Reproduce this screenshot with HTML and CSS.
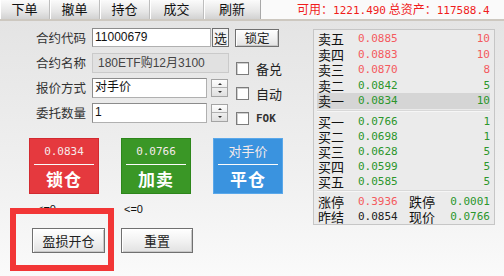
FILE: index.html
```html
<!DOCTYPE html>
<html lang="zh-CN">
<head>
    <meta charset="UTF-8">
    <title>期权下单</title>
    <link rel="stylesheet" href="styles.css">
</head>
<body>
<div class="app">
    <div class="topbar">
        <div class="tabs">
            <span class="tab t1">下单</span>
            <span class="tab t2">撤单</span>
            <span class="tab t3">持仓</span>
            <span class="tab t4">成交</span>
            <span class="tab t5">刷新</span>
        </div>
        <div class="funds">可用：<span class="num">1221.490</span> 总资产：<span class="num">117588.4</span></div>
    </div>

    <div class="main">
        <div class="order">
            <div class="form">
                <div class="row">
                    <span class="lbl">合约代码</span>
                    <div class="field code">11000679</div>
                    <span class="pick">选</span>
                    <span class="btn lock">锁定</span>
                </div>
                <div class="row">
                    <span class="lbl">合约名称</span>
                    <div class="field name">180ETF购12月3100</div>
                    <span class="check"><i class="box"></i>备兑</span>
                </div>
                <div class="row">
                    <span class="lbl">报价方式</span>
                    <div class="field short">对手价</div>
                    <span class="spin"><i class="up"></i><i class="down"></i></span>
                    <span class="check"><i class="box"></i>自动</span>
                </div>
                <div class="row">
                    <span class="lbl">委托数量</span>
                    <div class="field short">1</div>
                    <span class="spin"><i class="up"></i><i class="down"></i></span>
                    <span class="check fok"><i class="box"></i>FOK</span>
                </div>
            </div>

            <div class="actions">
                <div class="big red">
                    <span class="price">0.0834</span>
                    <span class="act">锁仓</span>
                </div>
                <div class="big green">
                    <span class="price">0.0766</span>
                    <span class="act">加卖</span>
                </div>
                <div class="big blue">
                    <span class="price cn">对手价</span>
                    <span class="act">平仓</span>
                </div>
            </div>

            <div class="limits">
                <span class="lim">&lt;=0</span>
                <span class="lim">&lt;=0</span>
            </div>

            <div class="ops">
                <span class="btn op">盈损开仓</span>
                <span class="btn op">重置</span>
            </div>

            <div class="mark"></div>
        </div>

        <div class="quote">
            <div class="sell">
                <div class="q"><span class="ql">卖五</span><span class="qp up">0.0885</span><span class="qv up">10</span></div>
                <div class="q"><span class="ql">卖四</span><span class="qp up">0.0883</span><span class="qv up">10</span></div>
                <div class="q"><span class="ql">卖三</span><span class="qp up">0.0870</span><span class="qv up">8</span></div>
                <div class="q"><span class="ql">卖二</span><span class="qp dn">0.0842</span><span class="qv dn">5</span></div>
                <div class="q hl"><span class="ql">卖一</span><span class="qp dn">0.0834</span><span class="qv dn">10</span></div>
            </div>
            <div class="sep"></div>
            <div class="buy">
                <div class="q"><span class="ql">买一</span><span class="qp dn">0.0766</span><span class="qv dn">1</span></div>
                <div class="q"><span class="ql">买二</span><span class="qp dn">0.0698</span><span class="qv dn">1</span></div>
                <div class="q"><span class="ql">买三</span><span class="qp dn">0.0628</span><span class="qv dn">5</span></div>
                <div class="q"><span class="ql">买四</span><span class="qp dn">0.0599</span><span class="qv dn">5</span></div>
                <div class="q"><span class="ql">买五</span><span class="qp dn">0.0585</span><span class="qv dn">5</span></div>
            </div>
            <div class="sep"></div>
            <div class="stats">
                <div class="q"><span class="ql">涨停</span><span class="sv up">0.3936</span><span class="ql">跌停</span><span class="qv dn">0.0001</span></div>
                <div class="q"><span class="ql">昨结</span><span class="sv">0.0854</span><span class="ql">现价</span><span class="qv dn">0.0766</span></div>
            </div>
        </div>
    </div>
</div>
</body>
</html>
```

FILE: styles.css
```css
* {
    box-sizing: border-box;
    margin: 0;
    padding: 0;
}

body {
    width: 504px;
    height: 276px;
    overflow: hidden;
    font-family: "Noto Sans CJK SC", sans-serif;
    color: #222;
    background: #f8f8f8;
}

.app {
    width: 504px;
    height: 276px;
    display: flex;
    flex-direction: column;
}

/* top tab strip */
.topbar {
    height: 21px;
    display: flex;
    align-items: flex-start;
    background: #fafafa;
    border-bottom: 2px solid #cdc8c0;
}

.tabs {
    display: flex;
    height: 19px;
}

.tab {
    height: 19px;
    line-height: 18px;
    font-size: 13px;
    text-align: center;
    color: #111;
    background: linear-gradient(#fbfbfb, #e6e6e6 60%, #d2d2d2);
    border-right: 1px solid #bdbdbd;
    box-shadow: inset 1px 0 0 #ffffff;
}

.t1, .t2, .t3 { width: 50px; }
.t4 { width: 54px; }
.t5 { width: 57px; border-right-color: #a8a8a8; }

.funds {
    margin-left: 36px;
    font-size: 12px;
    line-height: 18px;
    color: #f01c1c;
    white-space: nowrap;
}

.funds .num {
    font-family: "DejaVu Sans Mono", monospace;
    font-size: 11px;
}

/* main area */
.main {
    flex: 1;
    display: flex;
    background: linear-gradient(#e4e4e4, #f0f0f0 60%, #fafafa);
}

.order {
    position: relative;
    width: 313px;
    padding-top: 4px;
}

.row {
    display: flex;
    align-items: center;
    height: 25px;
}

.lbl {
    width: 86px;
    text-align: right;
    font-size: 12.5px;
    line-height: 16px;
    color: #333;
    margin-right: 6px;
}

.field {
    height: 19px;
    font-family: "Liberation Sans", "Noto Sans CJK SC", sans-serif;
    font-size: 12px;
    line-height: 17px;
    padding-left: 2px;
    color: #111;
    background: #fff;
    border: 1px solid #b0b0b0;
    border-top-color: #8c8c8c;
    border-left-color: #8c8c8c;
}

.code { width: 119px; }

.name {
    width: 137px;
    height: 20px;
    line-height: 18px;
    padding-left: 5px;
    color: #444;
    background: #e1e1e1;
    border-color: #cacaca;
}

.short { width: 115px; height: 20px; }

.pick {
    width: 17px;
    height: 19px;
    margin-left: 1px;
    font-size: 13px;
    line-height: 17px;
    text-align: center;
    background: #f4f4f4;
    border: 1px solid #6f6f6f;
}

.btn {
    display: inline-block;
    text-align: center;
    color: #222;
    background: linear-gradient(#ffffff, #f2f2f2 50%, #e2e2e2);
    border: 1px solid #707070;
    box-shadow: inset 1px 1px 0 #ffffff, inset -1px -1px 0 #c8c8c8;
}

.lock {
    width: 44px;
    height: 18px;
    margin-left: 6px;
    font-size: 12.5px;
    line-height: 16px;
}

.spin {
    display: flex;
    flex-direction: column;
    width: 17px;
    height: 18px;
    margin-left: 4px;
    border: 1px solid #a4a4a4;
    background: linear-gradient(#fdfdfd, #e0e0e0);
}

.spin i {
    flex: 1;
    position: relative;
}

.spin .up { border-bottom: 1px solid #b0b0b0; }

.spin i::after {
    content: "";
    position: absolute;
    left: 6px;
    top: 3px;
    border-left: 2px solid transparent;
    border-right: 2px solid transparent;
}

.spin .up::after { border-bottom: 2px solid #333; }
.spin .down::after { border-top: 2px solid #333; }

.check {
    align-self: flex-end;
    display: flex;
    align-items: center;
    height: 13px;
    margin-left: 7px;
    font-size: 13px;
    line-height: 13px;
    color: #222;
}

.short + .spin + .check { margin-left: 8px; }

.box {
    width: 13px;
    height: 13px;
    margin-right: 7px;
    background: #fff;
    border: 1px solid #7c7c7c;
    box-shadow: inset 1px 1px 0 #cfcfcf;
}

.fok {
    font-family: "DejaVu Sans Mono", monospace;
    font-size: 11px;
    font-weight: bold;
    color: #333;
}

/* order action tiles */
.actions {
    display: flex;
    gap: 22px;
    margin-top: 13px;
    padding-left: 29px;
}

.big {
    display: flex;
    flex-direction: column;
    align-items: stretch;
    width: 70px;
    height: 56px;
    color: #fff;
    text-align: center;
    border: 1px solid;
}

.red { background: #e5393e; border-color: #d22a30; }
.green { background: #3a9726; border-color: #2d861b; }
.blue { background: #3a93df; border-color: #5aa8ea; }

.price {
    height: 26px;
    margin: 0 4px;
    padding-top: 6px;
    font-family: "DejaVu Sans Mono", monospace;
    font-size: 11px;
    line-height: 14px;
    color: #f6eaea;
    border-bottom: 1px solid #fbfbfb;
}

.price.cn {
    padding-top: 4px;
    font-family: "Noto Sans CJK SC", sans-serif;
    font-size: 13px;
    line-height: 16px;
}

.act {
    flex: 1;
    font-size: 17px;
    font-weight: bold;
    line-height: 27px;
    letter-spacing: 1px;
}

.limits {
    display: flex;
    height: 12px;
    margin-top: 9px;
    padding-left: 37px;
    font-family: "Liberation Sans", sans-serif;
    font-size: 11px;
    line-height: 12px;
    color: #111;
}

.lim { width: 87px; }

.ops {
    display: flex;
    gap: 16px;
    margin-top: 13px;
    padding-left: 32px;
}

.op {
    width: 73px;
    height: 25px;
    font-size: 13px;
    line-height: 23px;
}

.ops .op + .op { width: 72px; }

/* highlight annotation */
.mark {
    position: absolute;
    left: 10px;
    top: 187px;
    width: 104px;
    height: 63px;
    border: 6px solid #f23636;
}

/* quote panel */
.quote {
    width: 182px;
    height: 196px;
    margin-top: 8px;
    padding: 1px 4px 0 3px;
    background: #ebebeb;
    border: 1px solid #c6c6c6;
}

.q {
    display: flex;
    align-items: center;
    height: 15px;
    padding-left: 1px;
}

.sell .q { height: 15.5px; }

.q.hl { background: #d5d5d5; }

.ql {
    width: 40px;
    font-size: 13px;
    line-height: 15px;
    color: #111;
}

.qp, .qv, .sv {
    font-family: "DejaVu Sans Mono", monospace;
    font-size: 11px;
    line-height: 15px;
}

.qp { flex: 1; }
.qv { flex: 1; text-align: right; }
.sv { width: 51px; color: #222; }

.up { color: #f45a5e; }
.dn { color: #2c962c; }

.sep {
    height: 2px;
    margin: 1.5px 0;
    background: #d8d8d8;
    border-bottom: 1px solid #f6f6f6;
}
```
